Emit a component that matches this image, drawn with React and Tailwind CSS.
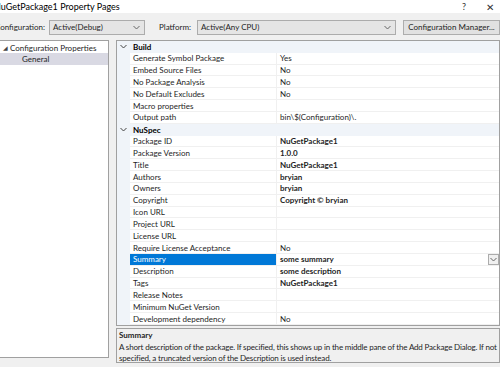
import React from 'react';

const build = [
    ['Generate Symbol Package', 'Yes'],
    ['Embed Source Files', 'No'],
    ['No Package Analysis', 'No'],
    ['No Default Excludes', 'No'],
    ['Macro properties', ''],
    ['Output path', 'bin\\$(Configuration)\\.'],
];

const nuspec = [
    ['Package ID', 'NuGetPackage1', true],
    ['Package Version', '1.0.0', true],
    ['Title', 'NuGetPackage1', true],
    ['Authors', 'bryian', true],
    ['Owners', 'bryian', true],
    ['Copyright', 'Copyright © bryian', true],
    ['Icon URL', ''],
    ['Project URL', ''],
    ['License URL', ''],
    ['Require License Acceptance', 'No'],
    ['Summary', 'some summary', true, true],
    ['Description', 'some description', true],
    ['Tags', 'NuGetPackage1', true],
    ['Release Notes', ''],
    ['Minimum NuGet Version', ''],
    ['Development dependency', 'No'],
];

function Chevron({ className }) {
    return (
        <svg width="7" height="5" viewBox="0 0 7 5" className={className}>
            <path d="M0.5 1 L3.5 4 L6.5 1" fill="none" stroke="currentColor" strokeWidth="1" />
        </svg>
    );
}

function Category({ name }) {
    return (
        <div className="flex items-center bg-[#f0f4f9] min-h-0 overflow-hidden">
            <div className="w-[13px] flex justify-center text-[#444]"><Chevron /></div>
            <span className="pl-[3px] font-bold text-black">{name}</span>
        </div>
    );
}

function Row({ name, value, bold, selected }) {
    return (
        <div className="flex bg-[#f0f4f9] min-h-0">
            <div className="w-[13px]" />
            <div className={`w-[146px] flex items-center pl-[3px] border-b border-[#f0f0f0] whitespace-nowrap ${selected ? 'bg-[#0078d7] text-white' : 'bg-white'}`}>
                {name}
            </div>
            <div className="flex-1 flex items-center bg-white pl-[3px] border-b border-l border-[#f0f0f0] relative whitespace-nowrap">
                <span className={bold ? 'font-bold' : ''}>{value}</span>
                {selected && (
                    <div className="absolute right-0 top-0 w-[11px] h-[11px] border border-[#acacac] bg-[#f0f0f0] flex items-center justify-center text-[#666]">
                        <Chevron />
                    </div>
                )}
            </div>
        </div>
    );
}

export default function App() {
    return (
        <div className="w-[500px] h-[367px] bg-[#f0f0f0] text-[8px] leading-none text-[#1e1e1e] overflow-hidden" style={{ fontFamily: '"Segoe UI", Lato, sans-serif' }}>
            {/* Barra de título */}
            <div className="h-[13px] bg-white flex items-center justify-between">
                <span className="ml-[-6px] text-[9px] text-black whitespace-nowrap">NuGetPackage1 Property Pages</span>
                <div className="flex items-center gap-[20px] pr-[6px] text-[#333] text-[9px]">
                    <span>?</span>
                    <span className="text-[10px]">✕</span>
                </div>
            </div>

            {/* Configuración */}
            <div className="h-[27px] flex items-center pt-[1px]">
                <div className="w-[49px] overflow-hidden flex justify-end">
                    <span className="whitespace-nowrap pr-[4px]">Configuration:</span>
                </div>
                <div className="w-[96px] h-[15px] border border-[#acacac] bg-[#e5e5e5] flex items-center justify-between pl-[3px] pr-[4px]">
                    <span>Active(Debug)</span>
                    <Chevron className="text-[#666]" />
                </div>
                <span className="ml-[14px] w-[38px] whitespace-nowrap">Platform:</span>
                <div className="w-[199px] h-[15px] border border-[#acacac] bg-[#e5e5e5] flex items-center justify-between pl-[3px] pr-[4px]">
                    <span>Active(Any CPU)</span>
                    <Chevron className="text-[#666]" />
                </div>
                <button className="ml-[7px] w-[97px] h-[15px] border border-[#adadad] bg-[#e1e1e1] flex items-center justify-center whitespace-nowrap">
                    Configuration Manager...
                </button>
            </div>

            <div className="flex gap-[7px] h-[318px]">
                {/* Árbol */}
                <div className="w-[109px] h-[318px] bg-white border border-[#a0a0a0] border-l-0 pt-[1px]">
                    <div className="h-[11px] flex items-center">
                        <span className="ml-[3px] text-[6px] text-[#444]">◢</span>
                        <span className="ml-[2px] whitespace-nowrap">Configuration Properties</span>
                    </div>
                    <div className="h-[12px] flex items-center bg-[#d9d9e3] pl-[22px]">General</div>
                </div>

                <div className="flex-1 flex flex-col">
                    {/* Cuadrícula de propiedades */}
                    <div className="h-[286px] shrink-0 bg-white border border-[#a0a0a0] grid grid-rows-[repeat(24,minmax(0,1fr))] overflow-hidden">
                        <Category name="Build" />
                        {build.map(([n, v]) => <Row key={n} name={n} value={v} />)}
                        <Category name="NuSpec" />
                        {nuspec.map(([n, v, b, s]) => <Row key={n} name={n} value={v} bold={b} selected={s} />)}
                    </div>

                    {/* Descripción */}
                    <div className="mt-[2px] h-[35px] border border-[#a0a0a0] bg-[#f0f0f0] pl-[2px] pr-[1px] pt-[1px] leading-[11.5px]">
                        <div className="font-bold">Summary</div>
                        <div className="tracking-[-0.17px]">A short description of the package. If specified, this shows up in the middle pane of the Add Package Dialog. If not specified, a truncated version of the Description is used instead.</div>
                    </div>
                </div>
            </div>
        </div>
    );
}
